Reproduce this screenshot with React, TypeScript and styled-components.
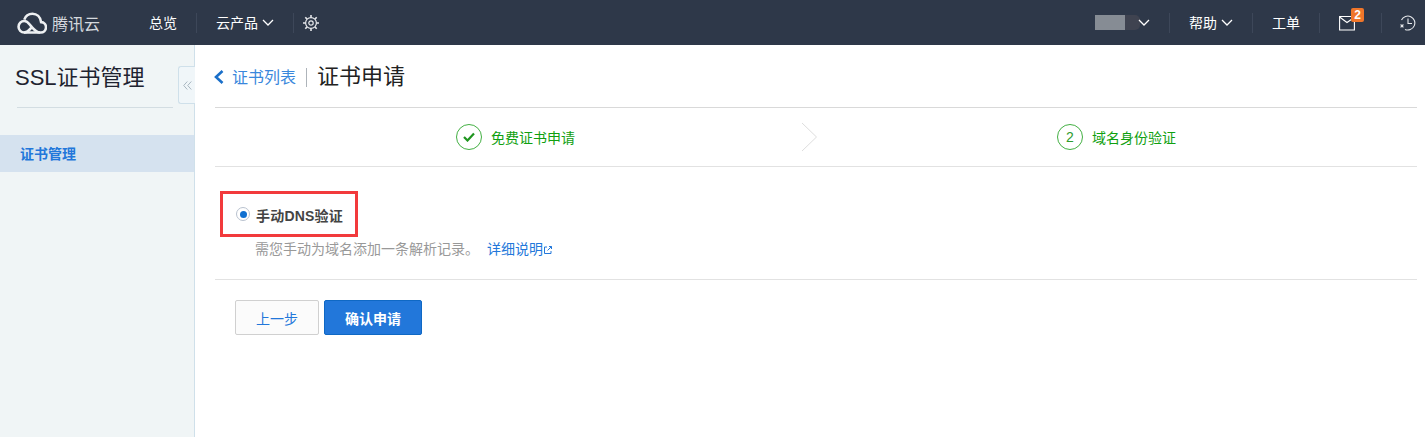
import React from 'react';
import styled, { createGlobalStyle } from 'styled-components';

const GlobalStyle = createGlobalStyle`
    html, body {
        margin: 0;
        padding: 0;
        background: #fff;
    }
    body {
        font-family: "Liberation Sans", "Noto Sans CJK SC", sans-serif;
        font-size: 14px;
        color: #333;
    }
`;

const Page = styled.div`
    display: flex;
    flex-direction: column;
    height: 437px;
    overflow: hidden;
`;

const TopBar = styled.div`
    display: flex;
    align-items: center;
    justify-content: space-between;
    flex: 0 0 45px;
    background: #2e3849;
`;

const NavGroup = styled.div`
    display: flex;
    align-items: center;
    height: 100%;
`;

const Logo = styled.div`
    display: flex;
    align-items: center;
    width: 149px;
    padding-left: 17px;
    box-sizing: border-box;
    color: #d5d9de;
    font-size: 16px;
    gap: 5px;
`;

const NavItem = styled.div<{ $divider?: boolean; $pad?: string }>`
    display: flex;
    align-items: center;
    gap: 4px;
    height: 20px;
    padding: ${p => p.$pad || '0 19px'};
    color: #fff;
    font-size: 14px;
    line-height: 20px;
    white-space: nowrap;
    border-right: ${p => (p.$divider ? '1px solid #3d4759' : 'none')};
`;

const Mask = styled.div`
    display: flex;
    width: 45px;
    height: 15px;
    margin-right: -6px;
    border-radius: 0 5px 5px 0;
    background: #3f4350;
`;

const MaskLight = styled.div`
    width: 30px;
    height: 15px;
    background: #868c94;
`;

const MailWrap = styled.div`
    position: relative;
    display: flex;
    width: 16px;
    height: 16px;
`;

const Badge = styled.span`
    position: absolute;
    top: -7px;
    left: 12px;
    width: 13px;
    height: 14px;
    border-radius: 2px;
    background: #f0762a;
    color: #fff;
    font-size: 12px;
    font-weight: 700;
    line-height: 14px;
    text-align: center;
`;

const Body = styled.div`
    display: flex;
    flex: 1;
    min-height: 0;
`;

const Sidebar = styled.aside`
    position: relative;
    flex: 0 0 195px;
    box-sizing: border-box;
    background: #f0f5f6;
    border-right: 1px solid #cfe0ea;
`;

const SideTitle = styled.div`
    margin: 0 21px 0 17px;
    padding: 17px 0 14px 0;
    height: 31px;
    color: #1e2330;
    font-size: 22px;
    line-height: 31px;
    white-space: nowrap;
    text-indent: -2px;
    border-bottom: 1px solid #d3dde2;
    box-sizing: content-box;
`;

const SideItem = styled.div`
    margin-top: 27px;
    height: 37px;
    padding-left: 20px;
    background: #d5e2ef;
    color: #2277da;
    font-size: 14px;
    font-weight: 700;
    line-height: 38px;
`;

const CollapseTab = styled.div`
    position: absolute;
    top: 21px;
    left: 178px;
    display: flex;
    align-items: center;
    justify-content: center;
    width: 17px;
    height: 38px;
    box-sizing: border-box;
    background: #f0f6f9;
    border: 1px solid #cfe0ea;
    border-right: none;
    border-radius: 3px 0 0 3px;
`;

const Main = styled.main`
    flex: 1;
    min-width: 0;
    padding: 0 8px 0 20px;
`;

const Header = styled.div`
    display: flex;
    align-items: center;
    height: 63px;
    box-sizing: border-box;
    padding-top: 2px;
    border-bottom: 1px solid #d9d9d9;
`;

const BackLink = styled.a`
    display: flex;
    align-items: center;
    gap: 8px;
    height: 19px;
    padding-right: 10px;
    margin-left: -1px;
    border-right: 1px solid #aeb4ba;
    color: #3a87dc;
    font-size: 16px;
    line-height: 19px;
`;

const PageTitle = styled.h1`
    margin: 0 0 0 10px;
    color: #222;
    font-size: 22px;
    font-weight: 400;
    line-height: 30px;
`;

const Steps = styled.div`
    display: grid;
    grid-template-columns: 1fr 1fr;
    height: 59px;
    box-sizing: border-box;
    border-bottom: 1px solid #e2e2e2;
`;

const Step = styled.div`
    position: relative;
    display: flex;
    align-items: center;
    gap: 9px;
    padding-left: 241px;
    color: #10a010;
    font-size: 14px;
`;

const StepCircle = styled.span`
    display: flex;
    align-items: center;
    justify-content: center;
    width: 26px;
    height: 26px;
    box-sizing: border-box;
    border: 1px solid #43b043;
    border-radius: 50%;
    color: #2f9c2f;
    font-size: 14px;
`;

const StepArrow = styled.svg`
    position: absolute;
    top: 14px;
    right: -3px;
`;

const OptionArea = styled.div`
    height: 113px;
    box-sizing: border-box;
    padding: 24px 0 0 5px;
    border-bottom: 1px solid #e2e2e2;
`;

const RadioBox = styled.div`
    display: flex;
    align-items: center;
    gap: 6px;
    width: 138px;
    height: 46px;
    box-sizing: border-box;
    padding-left: 13px;
    border: 3px solid #f23a3c;
`;

const Radio = styled.span`
    display: flex;
    align-items: center;
    justify-content: center;
    width: 14px;
    height: 14px;
    box-sizing: border-box;
    border: 1px solid #b9c2cf;
    border-radius: 50%;
    background: #fff;
`;

const RadioDot = styled.span`
    width: 7px;
    height: 7px;
    border-radius: 50%;
    background: #0f6fd0;
`;

const RadioLabel = styled.span`
    padding-top: 2px;
    color: #444;
    font-size: 14px;
    font-weight: 700;
    letter-spacing: 0.2px;
    white-space: nowrap;
`;

const Hint = styled.div`
    display: flex;
    align-items: center;
    height: 18px;
    margin: 2px 0 0 35px;
    color: #999;
    font-size: 14px;
`;

const HelpLink = styled.a`
    display: flex;
    align-items: center;
    gap: 1px;
    margin-left: 8px;
    color: #2277da;
`;

const ExternalSvg = styled.svg`
    margin-top: 3px;
`;

const Actions = styled.div`
    display: flex;
    gap: 5px;
    padding: 20px 0 0 20px;
`;

const Button = styled.button<{ $primary?: boolean }>`
    height: 35px;
    width: ${p => (p.$primary ? '98px' : '84px')};
    padding: 0;
    border: 1px solid ${p => (p.$primary ? '#0f68c4' : '#d0d0d0')};
    border-radius: 2px;
    background: ${p => (p.$primary ? '#2277da' : '#fbfbfb')};
    color: ${p => (p.$primary ? '#fff' : '#2277da')};
    font-family: inherit;
    font-size: 14px;
    font-weight: ${p => (p.$primary ? 700 : 400)};
`;

const Chevron = () => (
    <svg width="12" height="7" viewBox="0 0 12 7" fill="none" stroke="#fff" strokeWidth="1.3">
        <path d="M1 1l5 5 5-5" />
    </svg>
);

const CloudLogo = () => (
    <svg width="30" height="22" viewBox="0 0 30 22" fill="none" stroke="#eef0f2" strokeWidth="2.6">
        <path d="M7 20.500h16.500a5.200 5.200 0 0 0 .6-10.400C23.400 5 19.800 1.800 15.500 1.800c-3.800 0-7 2.400-8.200 5.800" />
        <path d="M23 20.500c-3.500 0-6-3-8.500-5.800S10.800 9 7.300 9a5.700 5.700 0 0 0 0 11.500c3.500 0 5.200-2.700 7.200-5" />
    </svg>
);

const GearIcon = () => (
    <svg width="16" height="16" viewBox="0 0 16 16" fill="none" stroke="#e6e8eb">
        <circle cx="8" cy="8" r="5.400" strokeWidth="1.200" />
        <circle cx="8" cy="8" r="2.200" strokeWidth="1.200" />
        <path
            d="M8 0v2.500M8 13.500V16M0 8h2.500M13.500 8H16M2.300 2.300l1.800 1.800M11.900 11.900l1.800 1.800M13.700 2.300l-1.800 1.800M4.100 11.900l-1.800 1.800"
            strokeWidth="1.600"
        />
    </svg>
);

const MailIcon = () => (
    <svg width="16" height="16" viewBox="0 0 16 16" fill="none" stroke="#fff" strokeWidth="1.100">
        <path d="M.6 1.500h14.800v13.500H.6z" />
        <path d="M.6 2l7.400 5.500L13 4" />
    </svg>
);

const ClockIcon = () => (
    <svg width="16" height="16" viewBox="0 0 16 16" fill="none" stroke="#e6e8eb" strokeWidth="1.100">
        <path d="M1.500 5A7 7 0 1 1 5 14.400" />
        <path d="M8 3.500V8.500h4" />
        <path d="M.6 9.500l2.800 2.800M3.400 9.500L.6 12.300" />
    </svg>
);

const DoubleLeft = () => (
    <svg width="9" height="9" viewBox="0 0 9 9" fill="none" stroke="#a9b7c1" strokeWidth="1">
        <path d="M4.300.5L.7 4.500l3.600 4M8.300.5L4.700 4.500l3.600 4" />
    </svg>
);

const BackArrow = () => (
    <svg width="10" height="14" viewBox="0 0 10 14" fill="none" stroke="#1a6fc9" strokeWidth="2.600">
        <path d="M8.500 1L2 7l6.500 6" />
    </svg>
);

const CheckIcon = () => (
    <svg width="12" height="10" viewBox="0 0 12 10" fill="none" stroke="#1f951f" strokeWidth="2.200">
        <path d="M1 5l3.500 3.500L11 1.500" />
    </svg>
);

const ExternalIcon = () => (
    <ExternalSvg width="8" height="8" viewBox="0 0 8 8" fill="none" stroke="#2277da" strokeWidth="1">
        <path d="M3 1H.5v6.500H7V5" />
        <path d="M3.500 4.500L7.500.5M5 .5h2.500V3" />
    </ExternalSvg>
);

const App = () => (
    <Page>
        <GlobalStyle />
        <TopBar>
            <NavGroup>
                <Logo>
                    <CloudLogo />
                    腾讯云
                </Logo>
                <NavItem $divider $pad="0 19px 0 0">总览</NavItem>
                <NavItem $divider>
                    云产品
                    <Chevron />
                </NavItem>
                <NavItem $pad="0 0 0 9px">
                    <GearIcon />
                </NavItem>
            </NavGroup>
            <NavGroup>
                <NavItem $divider $pad="0 19px 0 0">
                    <Mask>
                        <MaskLight />
                    </Mask>
                    <Chevron />
                </NavItem>
                <NavItem $divider>
                    帮助
                    <Chevron />
                </NavItem>
                <NavItem $divider>工单</NavItem>
                <NavItem $divider $pad="0 26px 0 19px">
                    <MailWrap>
                        <MailIcon />
                        <Badge>2</Badge>
                    </MailWrap>
                </NavItem>
                <NavItem $pad="0 9px 0 18px">
                    <ClockIcon />
                </NavItem>
            </NavGroup>
        </TopBar>
        <Body>
            <Sidebar>
                <SideTitle>SSL证书管理</SideTitle>
                <SideItem>证书管理</SideItem>
                <CollapseTab>
                    <DoubleLeft />
                </CollapseTab>
            </Sidebar>
            <Main>
                <Header>
                    <BackLink>
                        <BackArrow />
                        证书列表
                    </BackLink>
                    <PageTitle>证书申请</PageTitle>
                </Header>
                <Steps>
                    <Step>
                        <StepCircle>
                            <CheckIcon />
                        </StepCircle>
                        免费证书申请
                        <StepArrow width="18" height="30" viewBox="0 0 18 30" fill="none" stroke="#dedede">
                            <path d="M1 1l14.500 14L1 29" />
                        </StepArrow>
                    </Step>
                    <Step>
                        <StepCircle>2</StepCircle>
                        域名身份验证
                    </Step>
                </Steps>
                <OptionArea>
                    <RadioBox>
                        <Radio>
                            <RadioDot />
                        </Radio>
                        <RadioLabel>手动DNS验证</RadioLabel>
                    </RadioBox>
                    <Hint>
                        需您手动为域名添加一条解析记录。
                        <HelpLink>
                            详细说明
                            <ExternalIcon />
                        </HelpLink>
                    </Hint>
                </OptionArea>
                <Actions>
                    <Button>上一步</Button>
                    <Button $primary>确认申请</Button>
                </Actions>
            </Main>
        </Body>
    </Page>
);

export default App;
